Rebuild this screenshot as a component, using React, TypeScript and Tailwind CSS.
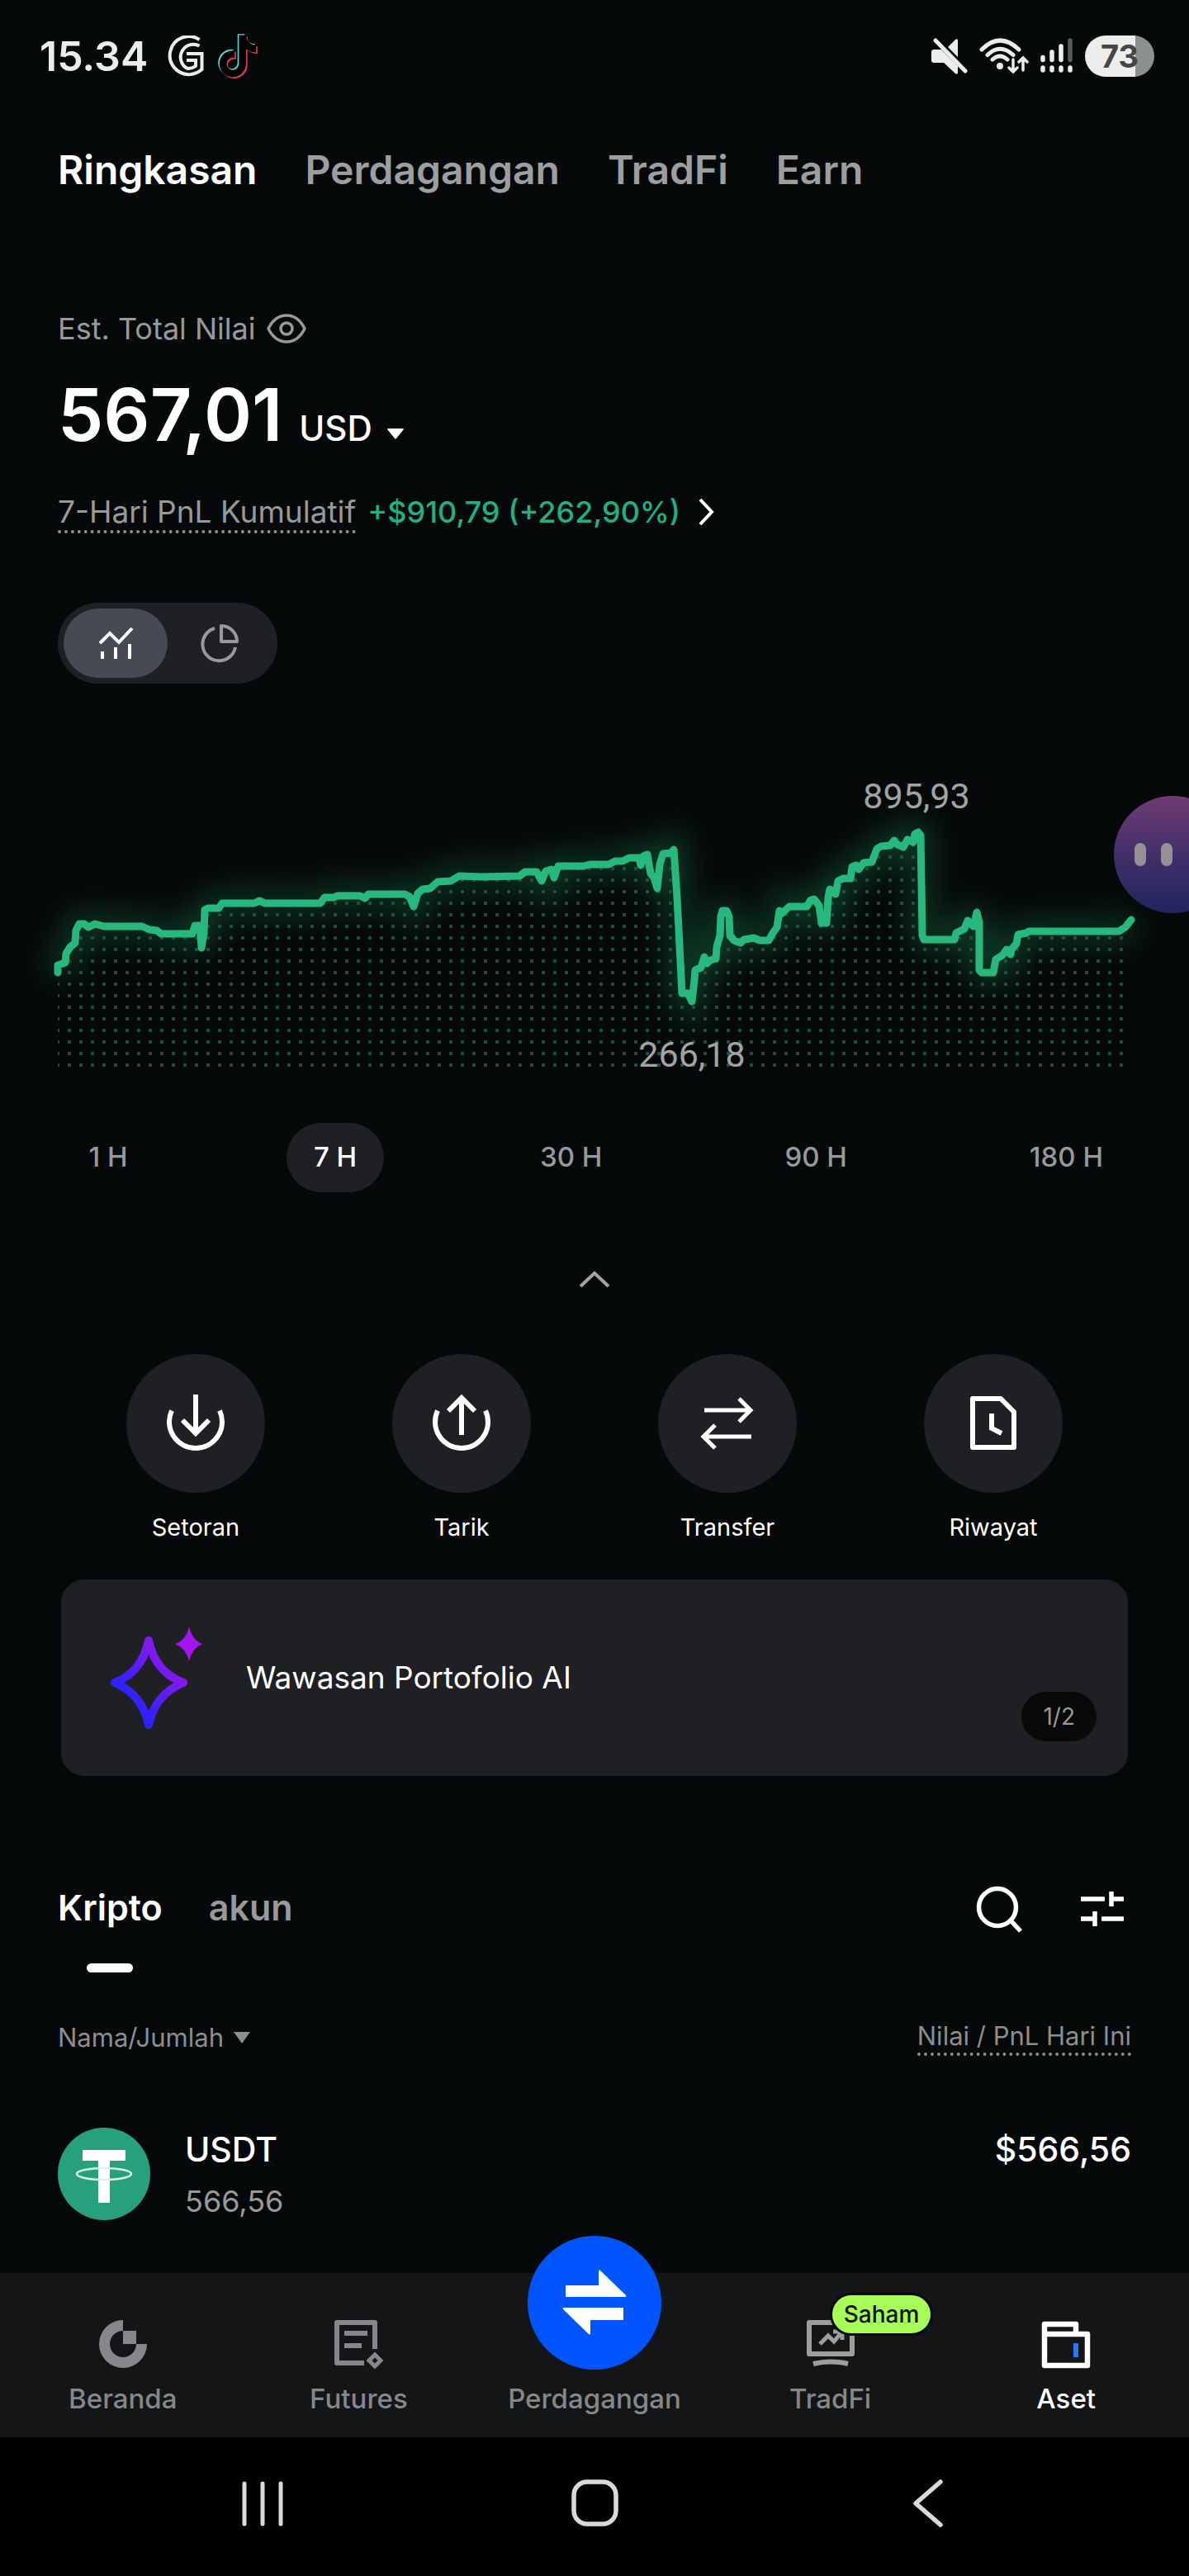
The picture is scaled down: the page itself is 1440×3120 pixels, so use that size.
import { useState } from "react";

const topTabs = ["Ringkasan", "Perdagangan", "TradFi", "Earn"];
const ranges = ["1 H", "7 H", "30 H", "90 H", "180 H"];

const linePoints =
  "70,278 70,269 79,266 80,255 85,247 91,242 92,227 96,219 102,219 107,223 115,219 126,222 172,222 181,226 190,227 195,231 233,231 236,221 242,221 244,248 247,230 248,202 252,200 265,200 269,194 308,194 314,191 321,194 388,194 393,187 404,187 409,185 436,185 442,188 446,183 490,183 496,186 501,198 506,182 512,177 521,176 530,168 546,167 556,161 583,162 629,161 636,156 650,156 656,167 661,155 668,153 671,163 676,149 707,149 714,147 737,147 745,143 754,143 762,139 774,139 776,148 779,137 784,135 788,158 792,163 796,176 799,147 803,134 813,133 816,129 820,187 826,303 833,303 838,313 841,287 842,275 849,272 853,259 856,267 860,263 867,261 868,247 872,233 873,210 875,203 880,203 883,210 884,233 889,239 897,242 901,238 913,236 920,239 931,239 936,230 941,223 944,203 946,207 956,198 977,198 982,190 986,189 992,197 995,218 1001,218 1003,187 1005,177 1012,183 1015,167 1021,164 1030,164 1032,150 1037,148 1040,153 1046,145 1056,144 1062,128 1067,125 1078,124 1083,118 1087,123 1094,126 1099,117 1106,120 1108,110 1112,108 1115,112 1116,170 1117,233 1119,238 1156,238 1158,230 1168,225 1172,215 1179,222 1183,205 1186,217 1186,275 1189,278 1203,278 1206,262 1214,257 1219,250 1224,256 1225,250 1231,243 1233,232 1243,230 1246,228 1355,228 1363,223 1370,214";

const notePath =
  "M448,209.91a210.06,210.06,0,0,1-122.77-39.25V349.38A162.55,162.55,0,1,1,185,188.31V278.2a74.62,74.62,0,1,0,52.23,71.18V0l88,0a121.18,121.18,0,0,0,1.86,22.17h0A122.18,122.18,0,0,0,381,102.39a121.43,121.43,0,0,0,67,20.14Z";

const actions = [
  {
    label: "Setoran",
    icon: (
      <svg width="72" height="72" viewBox="0 0 72 72" fill="none" stroke="currentColor" strokeWidth="6">
        <path d="M36 1v46M20 32l16 16 16-16" />
        <path d="M7 20.500A32 32 0 1 0 65 20.500" />
      </svg>
    ),
  },
  {
    label: "Tarik",
    icon: (
      <svg width="72" height="72" viewBox="0 0 72 72" fill="none" stroke="currentColor" strokeWidth="6">
        <path d="M36 50V5M20 21L36 5l16 16" />
        <path d="M7 20.500A32 32 0 1 0 65 20.500" />
      </svg>
    ),
  },
  {
    label: "Transfer",
    icon: (
      <svg width="72" height="72" viewBox="0 0 72 72" fill="none" stroke="currentColor" strokeWidth="5">
        <path d="M8 20h56M50 6l14 14-14 14M65 52H8M21 38L7 52l14 14" />
      </svg>
    ),
  },
  {
    label: "Riwayat",
    icon: (
      <svg width="72" height="72" viewBox="0 0 72 72" fill="none" stroke="currentColor" strokeWidth="6">
        <path d="M11 6h34l16 16v43H11z" strokeLinejoin="round" />
        <path d="M34 24v18l12 6" />
      </svg>
    ),
  },
];

function StatusBar() {
  return (
    <div className="flex h-[136px] items-center justify-between pl-12 pr-[42px] text-[#ebecec]">
      <div className="flex items-center">
        <span className="text-[50px] font-semibold leading-[60px]">15.34</span>
        <svg className="ml-6" width="44" height="50" viewBox="0 0 44 50" fill="none" stroke="currentColor" strokeWidth="4">
          <path d="M38.500 5A23 23 0 1 0 28 47Q36 46 41.500 41V22H23" />
          <path d="M38.500 12.500A15.500 15.500 0 1 0 24 40Q30 40 34 37V30H23" />
        </svg>
        <svg className="ml-4" width="50" height="54" viewBox="-16 -16 480 544">
          <path d={notePath} fill="#4fdfe0" transform="translate(-16 -14)" />
          <path d={notePath} fill="#e83a5c" transform="translate(16 16)" />
          <path d={notePath} fill="#000000" />
        </svg>
      </div>
      <div className="flex items-center gap-3.5">
        <svg width="44" height="44" viewBox="0 0 44 44" fill="currentColor">
          <path d="M3 14h9l20 20v8q0 3-3 1L15 30H3q-3 0-3-3V17q0-3 3-3zM32 3v20L20 11l9-9q3-2 3 1z" />
          <path d="M5 3l36 37" stroke="currentColor" strokeWidth="5" strokeLinecap="round" />
        </svg>
        <svg width="60" height="44" viewBox="0 0 60 44" fill="none" stroke="currentColor" strokeWidth="5" strokeLinecap="round">
          <path d="M3 14Q25-8 48 14M10 20.500Q25 6 41 20.500M16 26Q25 18 34 26" />
          <circle cx="25" cy="34" r="4" fill="currentColor" stroke="none" />
          <path d="M41 26v15M36 36l5 5 5-5M53 39V24M48 29l5-5 5 5" strokeWidth="3.500" />
        </svg>
        <svg width="40" height="44" viewBox="0 0 40 44" stroke="currentColor" strokeWidth="5.500" strokeLinecap="round">
          <path d="M3 23.500v3M14 17v9.500M25 10v16.500M3 36v3M14 36v3M25 36v3M36 36v3" />
          <path d="M36 3v23.500" stroke="#5a5c5c" />
        </svg>
        <span className="flex h-[50px] w-[84px] items-center justify-center rounded-full bg-[linear-gradient(90deg,#ecedec_73%,#8e908f_73%)] text-[38px] font-bold leading-none text-[#454746]">
          73
        </span>
      </div>
    </div>
  );
}

function BalanceChart() {
  return (
    <svg className="w-full" viewBox="0 0 1440 410" fill="none" role="img" aria-label="7 H">
      <defs>
        <pattern id="dots" x="77" y="383" width="14" height="14" patternUnits="userSpaceOnUse">
          <rect x="5" y="5" width="4" height="4" rx="1" fill="#20503e" />
        </pattern>
        <filter id="glow" x="-10%" y="-30%" width="120%" height="160%">
          <feGaussianBlur stdDeviation="18" />
        </filter>
      </defs>
      <polyline points={linePoints} stroke="#1fa566" strokeWidth="24" opacity="0.35" filter="url(#glow)" />
      <polygon points={`${linePoints} 1361,230 1361,394 70,394`} fill="url(#dots)" />
      <polyline points={linePoints} stroke="#26b87c" strokeWidth="9" strokeLinejoin="round" strokeLinecap="round" />
      <g fill="#a2a4a3" fontFamily="Roboto, sans-serif" fontSize="43" textAnchor="middle">
        <text x="1110" y="79">895,93</text>
        <text x="838" y="392">266,18</text>
      </g>
    </svg>
  );
}

function NavItem({ label, active, children }: { label: string; active?: boolean; children: React.ReactNode }) {
  return (
    <a href="#" className={`relative flex flex-1 flex-col items-center pt-14 ${active ? "text-white" : "text-[#85878a]"}`}>
      <span className="flex h-[60px] items-center">{children}</span>
      <span className="mt-4 text-[33px] font-medium leading-[40px]">{label}</span>
    </a>
  );
}

export default function App() {
  const [tab, setTab] = useState("Ringkasan");
  const [range, setRange] = useState("7 H");
  const [view, setView] = useState("line");

  return (
    <div className="flex min-h-screen flex-col overflow-x-clip bg-[#060909] font-['Inter',sans-serif] text-white">
      <StatusBar />

      <nav className="mt-10 flex gap-[58px] px-[70px]">
        {topTabs.map((t) => (
          <button
            key={t}
            onClick={() => setTab(t)}
            className={`text-[48px] font-semibold leading-[60px] ${tab === t ? "text-white" : "text-[#9c9e9f]"}`}
          >
            {t}
          </button>
        ))}
      </nav>

      {/* Total balance */}
      <section className="mt-[140px] px-[70px]">
        <div className="flex items-center gap-3.5 text-[36px] leading-[44px] text-[#97999a]">
          Est. Total Nilai
          <button aria-label="Sembunyikan saldo">
            <svg width="48" height="36" viewBox="0 0 48 36" fill="none" stroke="currentColor" strokeWidth="3.500">
              <path d="M2 18Q10 2 24 2t22 16Q38 34 24 34T2 18z" strokeLinejoin="round" />
              <circle cx="24" cy="18" r="7" />
            </svg>
          </button>
        </div>
        <div className="mt-[38px] flex items-baseline gap-5">
          <span className="text-[88px] font-semibold leading-[88px]">567,01</span>
          <label className="flex items-baseline gap-4">
            <select aria-label="Mata uang" className="appearance-none bg-transparent text-[42px] font-medium leading-[48px]">
              <option>USD</option>
            </select>
            <svg className="mb-1" width="24" height="16" viewBox="0 0 24 16" fill="currentColor">
              <path d="M3 1h18q1.500 0 .500 1.500L13 13q-1 1-2 0L2.500 2.500Q1.500 1 3 1z" />
            </svg>
          </label>
        </div>
        <div className="mt-[52px] flex items-start">
          <span className="border-b-4 border-dotted border-[#8e9091] text-[37px] leading-[44px] text-[#97999a]">
            7-Hari PnL Kumulatif
          </span>
          <a href="#" className="ml-3.5 flex items-center gap-5 text-[36px] font-medium leading-[44px] text-[#1fb183]">
            +$910,79 (+262,90%)
            <svg width="22" height="36" viewBox="0 0 22 36" fill="none" stroke="white" strokeWidth="4">
              <path d="M4 3l14 15L4 33" />
            </svg>
          </a>
        </div>
        <div className="mt-[84px] inline-flex rounded-full bg-[#1f2023] p-[7px]">
          <button
            aria-label="Grafik garis"
            onClick={() => setView("line")}
            className={`flex h-[84px] w-[126px] items-center justify-center rounded-full ${view === "line" ? "bg-[#474a54] text-white" : "text-[#97999a]"}`}
          >
            <svg width="44" height="40" viewBox="0 0 44 40" fill="none" stroke="currentColor" strokeWidth="4">
              <path d="M3 20L15 8l11 11L42 2M6 30v9M22 25v14M39 21v18" />
            </svg>
          </button>
          <button
            aria-label="Alokasi"
            onClick={() => setView("pie")}
            className={`flex h-[84px] w-[126px] items-center justify-center rounded-full ${view === "pie" ? "bg-[#474a54] text-white" : "text-[#97999a]"}`}
          >
            <svg width="48" height="48" viewBox="0 0 48 48" fill="none" stroke="currentColor" strokeWidth="4">
              <path d="M18 6A20 20 0 1 0 43 29" />
              <path d="M26 3v19h19A19 19 0 0 0 26 3z" strokeLinejoin="round" />
            </svg>
          </button>
        </div>
      </section>

      <section className="relative mt-[72px]">
        <BalanceChart />
        {/* Floating assistant, half off the right edge */}
        <button
          aria-label="Asisten"
          className="absolute -right-[51px] top-16 flex size-[142px] items-center gap-[18px] rounded-full bg-linear-to-b from-[#6f3a72] via-[#42306a] to-[#20255e] pl-[25px]"
        >
          <span className="h-7 w-3.5 rounded-full bg-[#949096]" />
          <span className="h-7 w-3.5 rounded-full bg-[#949096]" />
        </button>
      </section>

      <div className="mt-[50px] flex justify-between px-[72px]">
        {ranges.map((r) => (
          <button
            key={r}
            onClick={() => setRange(r)}
            className={`h-[84px] min-w-[118px] rounded-full px-8 text-[33px] font-medium ${range === r ? "bg-[#1f2023] text-white" : "text-[#97999a]"}`}
          >
            {r}
          </button>
        ))}
      </div>

      <button aria-label="Tutup grafik" className="mt-[94px] self-center text-[#a2a4a3]">
        <svg width="40" height="22" viewBox="0 0 40 22" fill="none" stroke="currentColor" strokeWidth="4">
          <path d="M3 20L20 4l17 16" />
        </svg>
      </button>

      <div className="mt-20 grid grid-cols-4 px-[76px]">
        {actions.map((a) => (
          <button key={a.label} className="flex flex-col items-center">
            <span className="flex size-[168px] items-center justify-center rounded-full bg-[#1f2023]">{a.icon}</span>
            <span className="mt-6 text-[29px] leading-[36px]">{a.label}</span>
          </button>
        ))}
      </div>

      <a href="#" className="relative mx-[74px] mt-[45px] flex items-center gap-[50px] rounded-[28px] bg-[#1f2023] py-[55px] pl-[58px]">
        <svg width="116" height="128" viewBox="0 0 116 128" fill="none">
          <defs>
            <linearGradient id="spark" x1="0" y1="1" x2="1" y2="0">
              <stop offset="0.250" stopColor="#2a22ff" />
              <stop offset="0.600" stopColor="#6a1cf5" />
              <stop offset="1" stopColor="#b410e6" />
            </linearGradient>
          </defs>
          <path
            d="M48 19C53 43 66 61 90 70C66 80 53 97 48 121C43 97 30 80 7 70C30 61 43 43 48 19z"
            stroke="url(#spark)" strokeWidth="10" strokeLinejoin="round"
          />
          <path d="M97 2Q101 19 113 23Q101 28 97 44Q93 28 80 23Q93 19 97 2z" fill="#a216ee" />
        </svg>
        <span className="text-[37px] leading-[44px]">Wawasan Portofolio AI</span>
        <span className="absolute bottom-[42px] right-[38px] rounded-full bg-[#080a0a] px-[26px] py-3 text-[28px] leading-[36px] text-[#97999a]">
          1/2
        </span>
      </a>

      {/* Holdings */}
      <section className="mt-[131px] px-[70px]">
        <div className="flex items-start justify-between">
          <div className="flex gap-14 text-[43px] font-semibold leading-[56px]">
            <button className="flex flex-col items-center gap-10">
              Kripto
              <span className="h-[11px] w-14 rounded-full bg-white" />
            </button>
            <button className="self-start text-[#97999a]">akun</button>
          </div>
          <div className="flex items-center gap-[68px] pr-1.5">
            <button aria-label="Cari">
              <svg width="60" height="60" viewBox="0 0 60 60" fill="none" stroke="currentColor" strokeWidth="5.500">
                <circle cx="28" cy="28" r="22.500" />
                <path d="M43 43l13 14" />
              </svg>
            </button>
            <button aria-label="Filter">
              <svg width="56" height="60" viewBox="0 0 56 60" fill="none" stroke="currentColor" strokeWidth="5.500">
                <path d="M1 18h29M38 9v18M38 18h15M1 42h15M18 33v18M26 42h27" />
              </svg>
            </button>
          </div>
        </div>

        <table className="mt-[57px] w-full">
          <thead>
            <tr className="text-[31px] leading-[40px] text-[#8c8e90]">
              <th className="p-0 text-left font-normal" colSpan={2}>
                <button className="flex items-center gap-3">
                  Nama/Jumlah
                  <svg width="20" height="14" viewBox="0 0 20 14" fill="currentColor">
                    <path d="M0 0h20L10 14z" />
                  </svg>
                </button>
              </th>
              <th className="p-0 text-right font-normal">
                <span className="inline-block border-b-4 border-dotted border-[#8c8e90]">Nilai / PnL Hari Ini</span>
              </th>
            </tr>
          </thead>
          <tbody>
            <tr>
              <td className="w-[154px] pt-[86px]">
                <svg width="112" height="112" viewBox="0 0 112 112">
                  <circle cx="56" cy="56" r="56" fill="#26a17b" />
                  <path d="M30 27h52v13H63v51H49V40H30z" fill="white" />
                  <ellipse cx="56" cy="56" rx="33" ry="7" fill="none" stroke="#d8f5ea" strokeWidth="2.500" />
                </svg>
              </td>
              <td className="pt-[86px] align-top">
                <div className="text-[41px] font-medium leading-[54px]">USDT</div>
                <div className="mt-3 text-[36px] leading-[48px] text-[#97999a]">566,56</div>
              </td>
              <td className="pt-[86px] text-right align-top text-[41px] font-medium leading-[54px]">$566,56</td>
            </tr>
          </tbody>
        </table>
      </section>

      <footer className="mt-auto">
        <nav className="flex h-[199px] bg-[#141517] px-1.5">
          <NavItem label="Beranda">
            <svg width="60" height="60" viewBox="0 0 60 60" fill="currentColor">
              <path d="M30 1a29 29 0 1 0 29 29H46A16 16 0 1 1 30 14z" />
              <path d="M30 14h16v16H30z" />
            </svg>
          </NavItem>
          <NavItem label="Futures">
            <svg width="60" height="60" viewBox="0 0 60 60" fill="none" stroke="currentColor" strokeWidth="6">
              <path d="M37 53H4V4h46v32" strokeLinejoin="round" />
              <path d="M13 17h28M13 32h21" />
              <path d="M50 43l7 7-7 7-7-7z" strokeWidth="5" />
            </svg>
          </NavItem>
          <NavItem label="Perdagangan">
            <span className="absolute -top-[45px] left-1/2 flex size-[162px] -translate-x-1/2 items-center justify-center rounded-full bg-[#0055ff]">
              <svg width="78" height="80" viewBox="0 0 78 80" fill="white">
                <path d="M4 19h40V2q0-3 2-1l31 30q1 2-1 2H4zM74 46v15H34v16q0 3-2 1L1 48q-1-2 1-2z" />
              </svg>
            </span>
          </NavItem>
          <NavItem label="TradFi">
            <svg width="60" height="60" viewBox="0 0 60 60" fill="none" stroke="#9c9ea0" strokeWidth="6">
              <path d="M4 4h52v38H4z" strokeLinejoin="round" />
              <path d="M17 30l10-10 7 7 9-11M33 15h11v10" strokeWidth="5" />
              <path d="M9 54q21-5 42 0" />
            </svg>
            <span className="absolute left-[142px] top-6 rounded-full border-[3px] border-[#060909] bg-[#a6fd57] px-3.5 text-[28px] font-medium leading-[46px] text-[#0c1208]">
              Saham
            </span>
          </NavItem>
          <NavItem label="Aset" active>
            <svg width="60" height="60" viewBox="0 0 60 60" fill="none" stroke="currentColor" strokeWidth="6.500">
              <path d="M4 18v38h52V18zM4 20V6h38v12" strokeLinejoin="round" />
              <path d="M42 29v17" stroke="#2a78f0" strokeWidth="6" />
            </svg>
          </NavItem>
        </nav>

        {/* System navigation keys */}
        <div className="flex h-[168px] items-center justify-center gap-[342px] bg-black pb-2 text-[#dadada]">
          <button aria-label="Aplikasi terbaru">
            <svg width="60" height="60" viewBox="0 0 60 60" stroke="currentColor" strokeWidth="5" strokeLinecap="round">
              <path d="M8 6v49M30 6v49M52 6v49" />
            </svg>
          </button>
          <button aria-label="Layar utama">
            <svg width="60" height="60" viewBox="0 0 60 60" fill="none" stroke="currentColor" strokeWidth="5.500">
              <rect x="5" y="4" width="51" height="51" rx="16" />
            </svg>
          </button>
          <button aria-label="Kembali">
            <svg width="60" height="60" viewBox="0 0 60 60" fill="none" stroke="currentColor" strokeWidth="5.500" strokeLinecap="round" strokeLinejoin="round">
              <path d="M47 4L17 30l30 26" />
            </svg>
          </button>
        </div>
      </footer>
    </div>
  );
}
